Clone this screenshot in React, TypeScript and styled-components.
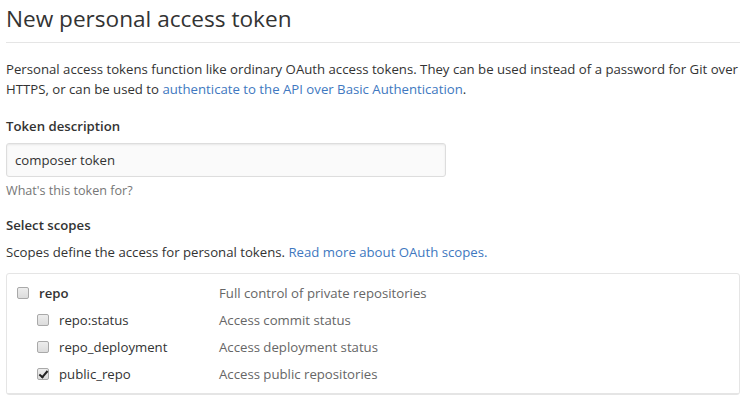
import * as React from "react";
import styled, { createGlobalStyle } from "styled-components";

const GlobalStyle = createGlobalStyle`
  html, body {
    margin: 0;
    padding: 0;
    background: #fff;
  }
  body {
    font-family: "Open Sans", "Noto Sans", "Liberation Sans", sans-serif;
    font-size: 13.2px;
    line-height: 1.5;
    color: #333;
  }
`;

const Page = styled.div`
  width: 734px;
  padding: 0 6px;
  overflow: hidden;
  height: 397px;
`;

const Header = styled.div`
  padding-top: 2px;
  padding-bottom: 6px;
  border-bottom: 1px solid #e5e5e5;
  margin-bottom: 16px;
`;

const Title = styled.h2`
  margin: 0;
  font-size: 22.6px;
  font-weight: 400;
  line-height: 34px;
`;

const Paragraph = styled.p<{ $tight?: boolean }>`
  margin: 0 0 ${(p) => (p.$tight ? "11px" : "16px")};
  line-height: 20px;
`;

const Link = styled.a`
  color: #4078c0;
  text-decoration: none;
`;

const FormGroup = styled.dl`
  margin: 0 0 14px;
`;

const Label = styled.dt`
  font-weight: 600;
  margin: 0 0 6px;
  line-height: 22px;
`;

const Field = styled.dd`
  margin: 0;
`;

const TextInput = styled.input`
  box-sizing: border-box;
  width: 440px;
  height: 34px;
  padding: 6px 8px;
  font: inherit;
  color: #333;
  background: #fafafa;
  border: 1px solid #ddd;
  border-radius: 3px;
  box-shadow: inset 0 1px 2px rgba(0, 0, 0, 0.075);
  outline: none;
`;

const Note = styled.p`
  margin: 5px 0 0;
  font-size: 12.6px;
  color: #767676;
  line-height: 18px;
`;

const ScopesBox = styled.div`
  border: 1px solid #e5e5e5;
  border-radius: 3px;
`;

const ScopeGroup = styled.ul`
  list-style: none;
  margin: 0;
  padding: 6px 0 5px;
  border-bottom: 1px solid #e5e5e5;
`;

const ScopeRow = styled.li<{ $child?: boolean }>`
  display: grid;
  grid-template-columns: ${(p) => (p.$child ? "182px" : "202px")} 1fr;
  align-items: center;
  height: 27px;
  padding-left: ${(p) => (p.$child ? "30px" : "10px")};
`;

const ScopeLabel = styled.label<{ $bold?: boolean }>`
  display: flex;
  align-items: center;
  gap: 10px;
  font-weight: ${(p) => (p.$bold ? 600 : 400)};
`;

const Check = styled.input`
  appearance: none;
  margin: 0;
  width: 12px;
  height: 12px;
  box-sizing: border-box;
  border: 1px solid #a9a9a9;
  border-radius: 2px;
  background: linear-gradient(#ededed, #dcdcdc);
  position: relative;
  &:checked::after {
    content: "";
    position: absolute;
    left: 3px;
    top: 0px;
    width: 3px;
    height: 7px;
    border: solid #222;
    border-width: 0 2px 2px 0;
    transform: rotate(40deg);
  }
`;

const ScopeDesc = styled.span`
  color: #666;
`;

const scopes = [
  { name: "repo", desc: "Full control of private repositories", child: false, checked: false },
  { name: "repo:status", desc: "Access commit status", child: true, checked: false },
  { name: "repo_deployment", desc: "Access deployment status", child: true, checked: false },
  { name: "public_repo", desc: "Access public repositories", child: true, checked: true },
];

export default function App() {
  return (
    <Page>
      <GlobalStyle />
      <Header>
        <Title>New personal access token</Title>
      </Header>
      <Paragraph>
        Personal access tokens function like ordinary OAuth access tokens. They can be used
        instead of a password for Git over HTTPS, or can be used to{" "}
        <Link href="#">authenticate to the API over Basic Authentication</Link>.
      </Paragraph>
      <FormGroup>
        <Label>Token description</Label>
        <Field>
          <TextInput defaultValue="composer token" />
          <Note>What's this token for?</Note>
        </Field>
      </FormGroup>
      <FormGroup>
        <Label>Select scopes</Label>
        <Field>
          <Paragraph $tight>
            Scopes define the access for personal tokens.{" "}
            <Link href="#">Read more about OAuth scopes.</Link>
          </Paragraph>
          <ScopesBox>
            <ScopeGroup>
              {scopes.map((s) => (
                <ScopeRow key={s.name} $child={s.child}>
                  <ScopeLabel $bold={!s.child}>
                    <Check type="checkbox" defaultChecked={s.checked} />
                    {s.name}
                  </ScopeLabel>
                  <ScopeDesc>{s.desc}</ScopeDesc>
                </ScopeRow>
              ))}
            </ScopeGroup>
          </ScopesBox>
        </Field>
      </FormGroup>
    </Page>
  );
}
